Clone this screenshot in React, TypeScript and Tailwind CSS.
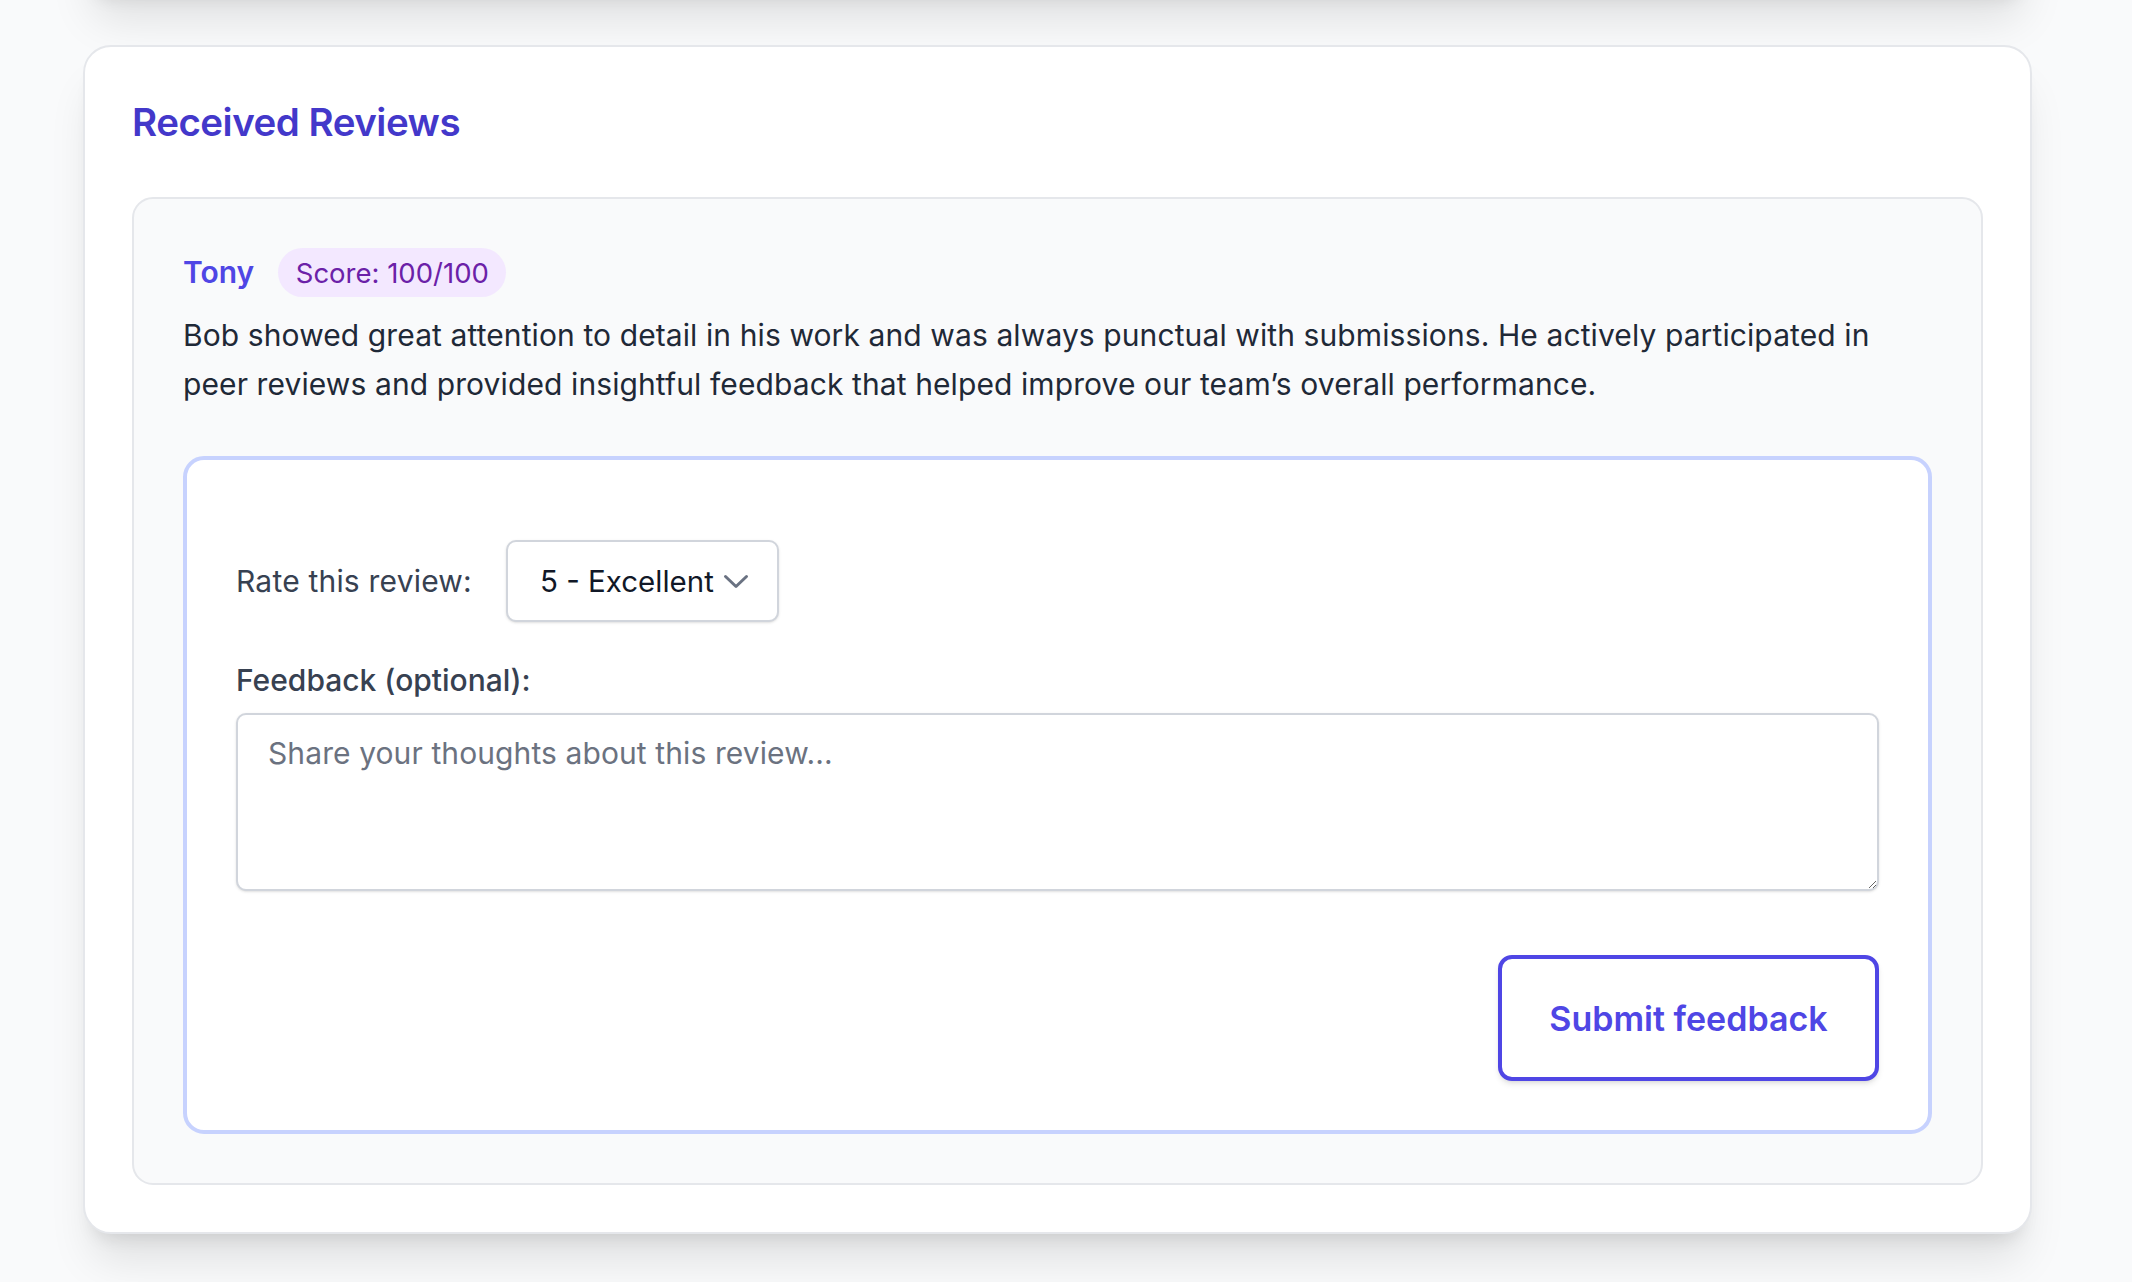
const font = { fontFamily: "Inter, 'Liberation Sans', sans-serif" };

const reviews = [
  {
    id: 1,
    name: "Tony",
    score: "100/100",
    text: "Bob showed great attention to detail in his work and was always punctual with submissions. He actively participated in peer reviews and provided insightful feedback that helped improve our team’s overall performance.",
  },
];

const Chevron = () => (
  <svg width="26" height="15" viewBox="0 0 26 15" fill="none" className="text-gray-500">
    <path d="M2.5 2.5l10.5 10 10.5-10" stroke="currentColor" strokeWidth="3" strokeLinecap="round" strokeLinejoin="round" />
  </svg>
);

const App = () => {
  return (
    <div className="flex min-h-screen flex-col bg-[#f9fafb] pl-[83px] pr-[100px] pb-[40px]" style={font}>
      {/* card above, only its shadow peeks in */}
      <div className="-mt-[200px] h-[194px] shrink-0 rounded-[28px] border-2 border-gray-200 bg-white shadow-[0_35px_44px_-9px_rgba(0,0,0,0.1),0_14px_17px_-10px_rgba(0,0,0,0.1)]"></div>
      <div className="mt-[51px] rounded-[28px] border-2 border-gray-200 bg-white p-[47px] shadow-[0_35px_44px_-9px_rgba(0,0,0,0.1),0_14px_17px_-10px_rgba(0,0,0,0.1)]">
        <h2 className="text-[38.5px] leading-[56px] font-semibold tracking-[-0.5px] text-[#4338ca]">Received Reviews</h2>
        <div className="mt-[47px] flex flex-col gap-6">
          {reviews.map((r) => (
            <div key={r.id} className="rounded-[21px] border-2 border-gray-200 bg-[#f9fafb] p-[49px]">
              <div className="flex items-center gap-[24px]">
                <span className="text-[30px] leading-[49px] font-semibold text-[#4f46e5]">{r.name}</span>
                <span className="rounded-full bg-[#f3e8ff] px-[17.5px] py-[3.5px] text-[27.5px] leading-[42px] text-[#6b21a8]">
                  Score: {r.score}
                </span>
              </div>
              <p className="mt-[14px] text-[30px] leading-[49px] tracking-[0.1px] text-[#1f2937]">{r.text}</p>

              <div className="mt-[47px] rounded-[21px] border-4 border-[#c7d2fe] bg-white px-[49px] pt-[80px] pb-[49px]">
                <div className="flex items-center gap-[34px]">
                  <span className="text-[30px] leading-[42px] tracking-[0.2px] text-[#374151]">Rate this review:</span>
                  <div className="flex h-[82px] items-center gap-[9px] rounded-[10px] border-2 border-gray-300 bg-white pl-[32px] pr-[28px] shadow-sm">
                    <span className="text-[29.5px] leading-[42px] text-[#111827]">5 - Excellent</span>
                    <Chevron />
                  </div>
                </div>

                <label className="mt-[37px] block text-[30px] leading-[42px] font-medium text-[#374151]">
                  Feedback (optional):
                </label>
                <textarea
                  className="mt-[12px] block h-[178px] w-full resize-y rounded-[10px] border-2 border-gray-300 bg-white px-[30px] py-[17px] text-[30px] leading-[42px] tracking-[0.1px] text-gray-900 shadow-sm outline-none placeholder:text-[#6b7280]"
                  style={font}
                  placeholder="Share your thoughts about this review..."
                ></textarea>

                <div className="mt-[64px] flex justify-end">
                  <button
                    className="h-[126px] w-[381px] rounded-[14px] border-4 border-[#4f46e5] bg-white text-[34px] leading-[49px] font-semibold text-[#4f46e5] shadow-md"
                    style={font}
                  >
                    Submit feedback
                  </button>
                </div>
              </div>
            </div>
          ))}
        </div>
      </div>
    </div>
  );
};

export default App;
